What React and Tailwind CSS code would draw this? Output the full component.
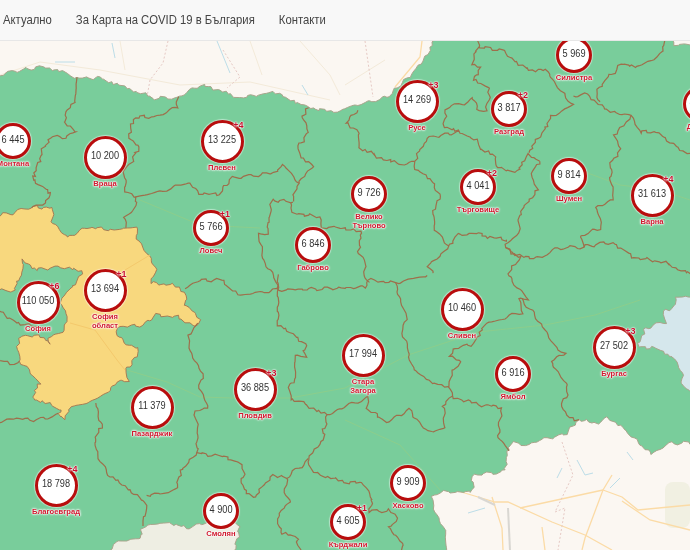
import React from "react";

const land = "-10,77 20,70 43,67 63,72 77,78 100,78 127,88 153,98 177,98 200,85 220,90 237,98 257,95 273,92 287,98 307,107 333,112 345,108 365,103 388,97 402,83 422,63 438,35 665,35 673,41 675,45 700,44 700,297 685,297 675,298 675,307 662,312 665,322 645,328 638,347 655,348 665,353 675,358 682,375 682,385 700,398 700,443 690,443 672,443 652,453 638,443 625,430 608,417 598,423 578,420 565,435 538,440 528,445 512,443 507,452 508,462 502,472 473,475 472,492 445,492 433,498 435,508 445,528 447,560 233,560 240,525 222,520 203,523 187,528 167,522 143,527 140,538 117,542 100,560 -10,560";

const sofiaOblast = "-10,217 13,213 30,207 53,208 52,220 67,238 87,227 113,230 137,227 138,240 147,253 157,270 150,283 173,285 185,292 185,305 200,318 197,327 177,317 157,315 143,325 117,327 117,335 127,345 138,347 137,357 125,370 128,380 117,382 107,392 90,402 70,407 65,418 57,415 62,410 43,402 32,398 40,383 30,372 20,362 17,345 23,335 43,337 50,343 48,337 63,333 67,317 62,308 62,297 72,288 83,273 70,268 57,267 37,270 23,260 22,275 12,292 -10,288";

const borders = [
  "77,78 75,100 65,115 65,123 77,132 68,137 50,137 43,150 35,173 32,180 52,193 42,205 30,207",
  "178,98 177,107 155,117 135,117 128,137 140,147 132,160 125,170 125,192 137,197 133,213 125,217 127,227",
  "137,197 157,192 187,183 200,193 217,195 233,178 257,175 277,172 283,163 298,183 293,200",
  "307,108 302,118 308,133 297,147 300,157 313,167 298,183",
  "293,202 272,200 267,233 258,235 263,260 275,275 277,290",
  "185,288 200,280 220,280 240,295 277,290 345,288 365,287 368,280 395,283 428,275",
  "290,203 293,213 320,217 323,227 345,228 362,233 358,250 367,263 363,275 368,283",
  "395,283 407,318 402,327 413,370 432,382 448,388 452,372 460,363 450,355 457,347 472,345 485,325 522,312 518,300 527,298 508,275 520,257 505,248",
  "448,388 452,397 482,405 502,407 498,435 508,452",
  "522,300 542,325 552,345 565,353 550,360 565,382 567,395 560,403 565,415 578,420",
  "345,407 367,398 367,408 385,422 408,410 427,432 445,428 443,407 452,397",
  "278,275 278,325 305,343 305,357 295,355 295,382 288,388 290,398 302,403 327,415 345,407",
  "327,415 322,442 308,458 312,472 322,475 345,482 362,483 372,498 370,512 388,510 397,518 388,528 402,542 403,560",
  "197,453 227,457 242,465 245,475 240,477 243,490 255,497 272,475 287,478 285,488 290,502 278,515 280,532 297,538 302,560",
  "287,478 308,460",
  "97,403 102,428 95,438 97,455 108,475 137,495 147,505 145,515 142,525",
  "147,495 167,493 177,487 180,472 197,453 197,448 198,438 195,410 208,407 200,388 202,375 193,355 187,338 197,325",
  "-10,428 10,418 37,420 57,415",
  "-10,302 7,318 25,325 40,327",
  "-10,358 10,363 20,362",
  "358,110 345,122 358,133 360,148 378,157 403,165 415,160 427,138 458,132 477,140 478,147 495,157 495,167 517,172 528,155 540,160",
  "458,132 443,125 447,108 465,103 473,97 477,110 487,110 490,88 473,80 480,68 472,63 478,47 478,35",
  "478,47 502,50 512,60 535,72 545,68 558,87 573,105 552,117 542,133 528,153",
  "573,97 585,93 598,103 613,113 632,115 615,135 620,150 610,163 613,200 595,208 602,228 582,235 583,247 558,248 542,257 525,258 505,248 508,242 518,235 520,213 537,190 532,173 540,160",
  "665,35 662,53 638,68 622,63 608,78 597,90 600,102",
  "632,115 640,132 657,132 670,143 700,160",
  "583,247 612,242 632,257 662,262 700,278",
  "415,160 415,170 425,175 435,183 440,200 433,210 435,230 448,247 458,235 478,233 488,237 508,240",
  "448,247 428,267 435,275",
];

const greenRoads = [
  "127,370 167,382 200,397 233,398 290,398 345,388 408,355 478,332 545,325 595,315 640,300",
  "345,420 400,445 440,490",
  "585,172 620,185 660,190 690,200",
  "140,200 200,225 260,228",
];

const yellowRoads = ["70,323 95,330 117,360 125,370", "113,290 125,270 150,255"];

const orangeRoads = [
  "448,488 478,497 495,502 508,502 552,522 585,535 612,550",
  "612,475 603,490 585,538 582,550",
  "603,490 622,497 638,510 690,505",
  "492,497 502,528 503,550",
  "520,508 603,490",
  "542,527 545,550",
  "422,41 420,57 395,87",
  "622,501 650,520 690,530",
];

const greyRoads = ["508,508 510,550", "478,497 495,505"];

const faintRoads = [
  "0,75 40,62 100,70 180,85 250,82 330,100",
  "120,41 125,70",
  "300,41 330,75 340,95",
  "250,41 262,75",
  "385,60 345,85",
];

const pinkBorders = [
  "168,41 163,63 150,80 147,97",
  "223,50 240,77 227,88",
  "365,41 373,97",
  "562,442 573,475 555,512 565,508 558,550",
];

const rivers = [
  "55,62 75,62",
  "217,41 230,73",
  "112,43 115,58",
  "302,85 308,95",
  "468,513 485,508",
  "557,478 562,468",
  "577,460 585,475 593,473",
  "610,488 620,478",
  "627,452 633,460",
];

const markers = [
  { x: 13, y: 141, big: false, value: "6 445", names: ["Монтана"] },
  { x: 105, y: 157, big: true, value: "10 200", names: ["Враца"] },
  { x: 222, y: 141, big: true, value: "13 225", names: ["Плевен"], plus: 4 },
  { x: 211, y: 228, big: false, value: "5 766", names: ["Ловеч"], plus: 1 },
  { x: 313, y: 245, big: false, value: "6 846", names: ["Габрово"] },
  { x: 417, y: 101, big: true, value: "14 269", names: ["Русе"], plus: 3 },
  { x: 509, y: 109, big: false, value: "3 817", names: ["Разград"], plus: 2 },
  { x: 574, y: 55, big: false, value: "5 969", names: ["Силистра"] },
  { x: 478, y: 187, big: false, value: "4 041", names: ["Търговище"], plus: 2 },
  { x: 569, y: 176, big: false, value: "9 814", names: ["Шумен"] },
  { x: 369, y: 194, big: false, value: "9 726", names: ["Велико", "Търново"] },
  { x: 652, y: 195, big: true, value: "31 613", names: ["Варна"], plus: 4 },
  { x: 701, y: 104, big: false, value: "8 351", names: ["Добрич"] },
  { x: 38, y: 302, big: true, value: "110 050", names: ["София"], plus: 6 },
  { x: 105, y: 290, big: true, value: "13 694", names: ["София", "област"], plus: 1 },
  { x: 152, y: 407, big: true, value: "11 379", names: ["Пазарджик"] },
  { x: 255, y: 389, big: true, value: "36 885", names: ["Пловдив"], plus: 3 },
  { x: 56, y: 485, big: true, value: "18 798", names: ["Благоевград"], plus: 4 },
  { x: 221, y: 511, big: false, value: "4 900", names: ["Смолян"] },
  { x: 348, y: 522, big: false, value: "4 605", names: ["Кърджали"], plus: 1 },
  { x: 363, y: 355, big: true, value: "17 994", names: ["Стара", "Загора"] },
  { x: 462, y: 309, big: true, value: "10 460", names: ["Сливен"] },
  { x: 513, y: 374, big: false, value: "6 916", names: ["Ямбол"] },
  { x: 614, y: 347, big: true, value: "27 502", names: ["Бургас"], plus: 3 },
  { x: 408, y: 483, big: false, value: "9 909", names: ["Хасково"] },
];

// offset depends only on position, so shared borders stay on top of each other
const nudge = (x, y) => [
  x + 1.1 * Math.sin(x * 0.9 + y * 1.7) + 0.8 * Math.sin(y * 0.43 + x * 0.2),
  y + 1.1 * Math.sin(x * 1.6 - y * 0.8) + 0.8 * Math.sin(x * 0.37 - y * 0.25),
];

const wiggle = (points, closed = false) => {
  const pts = points.split(" ").map((p) => p.split(",").map(Number));
  if (closed) pts.push(pts[0]);
  const out = [];
  pts.slice(1).forEach(([x2, y2], i) => {
    const [x1, y1] = pts[i];
    const steps = Math.max(1, Math.round(Math.hypot(x2 - x1, y2 - y1) / 3));
    for (let s = 0; s < steps; s++) {
      const t = s / steps;
      out.push(nudge(x1 + (x2 - x1) * t, y1 + (y2 - y1) * t));
    }
  });
  out.push(nudge(...pts[pts.length - 1]));
  return out.map(([x, y]) => `${x.toFixed(1)},${y.toFixed(1)}`).join(" ");
};

const Lines = ({ items, className }) => (
  <g fill="none" className={className}>
    {items.map((points) => (
      <polyline key={points} points={points} />
    ))}
  </g>
);

const BulgariaMap = () => (
  <svg viewBox="0 41 690 509" className="block w-full h-full bg-[#fbf7f2]">
    <rect x="620" y="285" width="70" height="125" fill="#d5e7ec" />
    <rect x="100" y="515" width="145" height="35" fill="#eeeee3" />
    <rect x="665" y="482" width="25" height="46" rx="8" fill="#f1f0e2" />
    <Lines items={faintRoads} className="stroke-[#f3ead9] stroke-1" />
    <Lines items={orangeRoads} className="stroke-[#fbdba6] stroke-[1.3]" />
    <Lines items={greyRoads} className="stroke-[#d9d7d2] stroke-2" />
    <Lines items={pinkBorders} className="stroke-[#e6c9c4] stroke-1 [stroke-dasharray:2_2]" />
    <Lines items={rivers} className="stroke-[#bcdde8] stroke-1" />
    <polygon points={wiggle(land, true)} fill="#79cd9b" stroke="#a9a58c" strokeWidth="1" />
    <Lines items={greenRoads} className="stroke-[#8ccd8c] stroke-1" />
    <polygon points={wiggle(sofiaOblast, true)} fill="#f8d87e" stroke="#a5744f" strokeWidth="0.9" />
    <Lines items={yellowRoads} className="stroke-[#f4c96c] stroke-1" />
    <Lines items={borders.map((b) => wiggle(b))} className="stroke-[#9e6f4b] stroke-[1.2]" />
  </svg>
);

const Marker = ({ x, y, big, value, names, plus }) => (
  <div
    className={`absolute flex flex-col items-center ${big ? "-ml-[21.5px] -mt-[21.5px] w-[43px]" : "-ml-[18px] -mt-[18px] w-9"}`}
    style={{ left: x, top: y - 41 }}
  >
    <div
      className={`relative shrink-0 flex items-center justify-center rounded-full bg-white border-[3.5px] border-[#b80d0d] shadow-[0_0_1px_1px_rgba(255,255,255,0.5)] ${big ? "w-[43px] h-[43px]" : "w-9 h-9"}`}
    >
      <span className="whitespace-nowrap text-[9.2px] leading-none text-[#333] scale-y-[1.15]">{value}</span>
      {plus && (
        <span
          className={`absolute text-[9px] font-bold leading-none text-[#c8102e] [text-shadow:0_0_1px_#fff,0_0_2px_#fff,0_0_2px_#fff] ${big ? "-right-[3px] -top-[2px]" : "-right-[4px] -top-[3px]"}`}
        >
          +{plus}
        </span>
      )}
    </div>
    <div className="flex flex-col items-center text-[7.6px] font-bold leading-[9px] text-[#d0182e] [text-shadow:0_0_1px_#fff,0_0_2px_#fff,0_0_2px_#fff,0_0_3px_#fff]">
      {names.map((name) => (
        <span key={name} className="whitespace-nowrap">{name}</span>
      ))}
    </div>
  </div>
);

const App = () => {
  return (
    <div className="h-[550px] w-[690px] overflow-hidden font-['Liberation_Sans',Arial,sans-serif]">
      <nav className="flex h-[41px] items-center gap-6 border-b border-[#e7e7e7] bg-[#f8f8f8] pl-[3px] text-[11.3px] text-[#444]">
        <a href="#" className="scale-y-110">Актуално</a>
        <a href="#" className="scale-y-110">За Карта на COVID 19 в България</a>
        <a href="#" className="scale-y-110">Контакти</a>
      </nav>
      <div className="relative h-[509px] overflow-hidden blur-[0.45px]">
        <BulgariaMap />
        {markers.map((marker) => (
          <Marker key={marker.value} {...marker} />
        ))}
      </div>
    </div>
  );
};

export default App;
